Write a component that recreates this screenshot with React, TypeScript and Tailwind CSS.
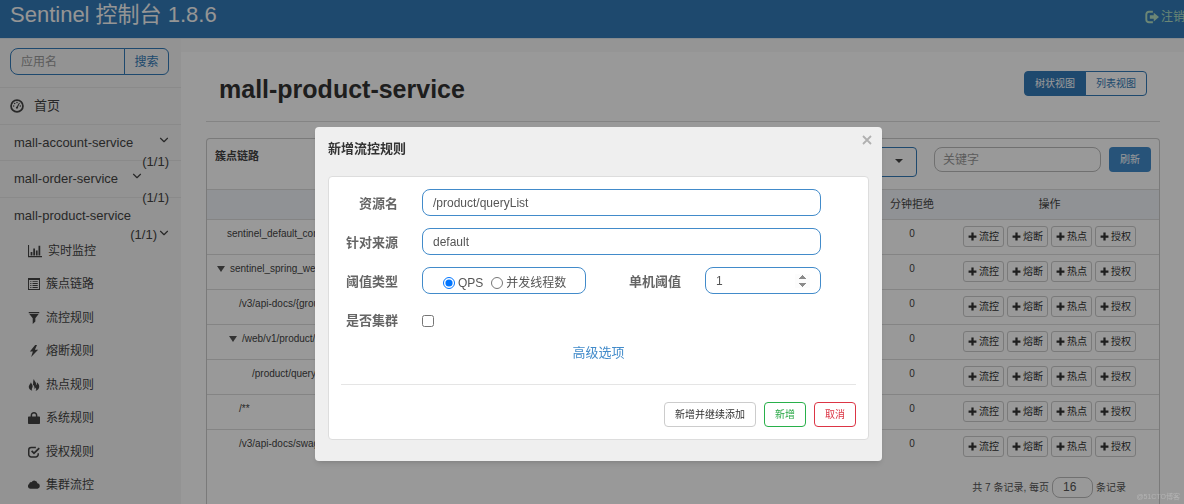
import { useState, type ReactNode } from "react"
import { ChevronDown } from "lucide-react"
import { clsx } from "clsx"

interface IconProps {
  className?: string
}

interface Resource {
  name: string
  indent: string
  expandable?: boolean
}

function Svg({ className, children }: IconProps & { children: ReactNode }) {
  return (
    <svg viewBox="0 0 16 16" fill="currentColor" aria-hidden="true" className={clsx("shrink-0", className)}>
      {children}
    </svg>
  )
}

const DashboardIcon = ({ className }: IconProps) => (
  <Svg className={className}>
    <circle cx="8" cy="8" r="6.8" fill="none" stroke="currentColor" strokeWidth="2" />
    <circle cx="4.2" cy="8" r=".9" />
    <circle cx="5.3" cy="5.2" r=".9" />
    <circle cx="8" cy="4" r=".9" />
    <circle cx="11.8" cy="8" r=".9" />
    <path d="M10.3 4.2l1 .6-2.2 4.3a1.3 1.3 0 1 1-1.2-.6z" />
  </Svg>
)

const StatsIcon = ({ className }: IconProps) => (
  <Svg className={className}>
    <path d="M0 1h1.2v12.800H16V15H0zM3 9h2v4H3zM6 5h2v8H6zM9 7.500h2V13H9zM12 2h2v11h-2z" />
  </Svg>
)

const ListIcon = ({ className }: IconProps) => (
  <Svg className={className}>
    <path
      fillRule="evenodd"
      d="M0 0h16v16H0zM1.300 2.600v12.100h13.400V2.600zM3 4.200h1.500v1.200H3zm3 0h7v1.200H6zM3 6.800h1.500V8H3zm3 0h7V8H6zM3 9.400h1.500v1.200H3zm3 0h7v1.200H6zM3 12h1.500v1.200H3zm3 0h7v1.200H6z"
    />
  </Svg>
)

const FilterIcon = ({ className }: IconProps) => (
  <Svg className={className}>
    <path d="M1 0h14v1.800H1zM1.800 2.500h12.400L9.800 8.300v4.400L6.300 16V8.300z" />
  </Svg>
)

const FlashIcon = ({ className }: IconProps) => (
  <Svg className={className}>
    <path d="M9.500 0L2.500 8.800h4L4.200 16l9.300-9.700H9.200L12 0z" />
  </Svg>
)

const FireIcon = ({ className }: IconProps) => (
  <Svg className={className}>
    <path d="M7.800 0c.4 2.600 3 3.800 3 6.600 0 .9-.3 1.500-.6 2 1.300-.6 2-2 1.600-4.200 2 1.600 3.200 3.500 3.200 5.600 0 2.900-1.900 5-5 6 1-1.400 1.300-3 .2-4.800-.3 1-.8 1.500-1.600 1.900.3-2.300-.3-4.200-2-5.500.6-2.600-.2-4.800 1.200-7.600z" />
    <path d="M3.900 4.400c.5 1.800 2.500 3.500 2.300 5.700-.2 1.900-2 3-.6 5.700C2.700 14.800 1 12.900 1 10.400c0-2.200 2.300-3.400 2.900-6z" />
  </Svg>
)

const LockIcon = ({ className }: IconProps) => (
  <Svg className={className}>
    <path
      fillRule="evenodd"
      d="M3.500 6V4.500C3.500 2 5.300 0 8 0s4.500 2 4.500 4.500V6H15a1 1 0 0 1 1 1v8a1 1 0 0 1-1 1H1a1 1 0 0 1-1-1V7a1 1 0 0 1 1-1zm2 0h5V4.500C10.500 3 9.500 2 8 2S5.500 3 5.500 4.500z"
    />
  </Svg>
)

const CheckIcon = ({ className }: IconProps) => (
  <Svg className={className}>
    <path
      d="M10.500 2H4.300A3.300 3.300 0 0 0 1 5.300v5.900a3.300 3.300 0 0 0 3.300 3.300h6a3.300 3.300 0 0 0 3.300-3.300V9.500"
      fill="none"
      stroke="currentColor"
      strokeWidth="2"
    />
    <path d="M4 7.300l1.600-1.600L8 8.100l6.200-6.200 1.600 1.600L8 11.300z" />
  </Svg>
)

const CloudIcon = ({ className }: IconProps) => (
  <Svg className={className}>
    <path d="M3.200 13A3.300 3.300 0 0 1 1.600 6.800 2.500 2.500 0 0 1 4.700 4.200a4.300 4.300 0 0 1 7.900 1.500 3.700 3.700 0 0 1 .2 7.300z" />
  </Svg>
)

const PlusIcon = ({ className }: IconProps) => (
  <Svg className={className}>
    <path d="M6 1h4v5h5v4h-5v5H6v-5H1V6h5z" />
  </Svg>
)

const LogoutIcon = ({ className }: IconProps) => (
  <Svg className={className}>
    <path d="M9 2H4.500A3 3 0 0 0 1.500 5v6a3 3 0 0 0 3 3H9" fill="none" stroke="currentColor" strokeWidth="2.200" />
    <path d="M10 3l6 5-6 5v-3H5.500V6H10z" />
  </Svg>
)

const menu = [
  { label: "实时监控", Icon: StatsIcon, size: "h-3.5 w-3.5" },
  { label: "簇点链路", Icon: ListIcon, size: "size-3" },
  { label: "流控规则", Icon: FilterIcon, size: "size-3" },
  { label: "熔断规则", Icon: FlashIcon, size: "size-3" },
  { label: "热点规则", Icon: FireIcon, size: "size-3" },
  { label: "系统规则", Icon: LockIcon, size: "size-3" },
  { label: "授权规则", Icon: CheckIcon, size: "size-3" },
  { label: "集群流控", Icon: CloudIcon, size: "size-3" },
]

const resources: Resource[] = [
  { name: "sentinel_default_context", indent: "pl-5" },
  { name: "sentinel_spring_web_context", indent: "pl-2.5", expandable: true },
  { name: "/v3/api-docs/{group}", indent: "pl-8" },
  { name: "/web/v1/product/list", indent: "pl-[22px]", expandable: true },
  { name: "/product/queryList", indent: "pl-[45px]" },
  { name: "/**", indent: "pl-8" },
  { name: "/v3/api-docs/swagger-config", indent: "pl-8" },
]

const actions = ["流控", "熔断", "热点", "授权"]

const fieldClass = "h-[27px] rounded-lg border border-[#428bca] bg-white px-2.5 text-xs text-[#555] outline-none"
const labelClass = "w-[70px] shrink-0 pt-[5px] text-right text-[13px] leading-5 font-bold text-[#666]"

function Header() {
  return (
    <header className="flex h-[39px] justify-between border-b border-[#e0e8ef] bg-[#337ab7] pl-2.5">
      <a href="#" className="text-[22px] leading-[30px] whitespace-nowrap text-[#f8f8f8]">
        Sentinel 控制台 1.8.6
      </a>
      <a href="#logout" className="flex h-[33px] w-[39px] items-center gap-0.5 text-xs whitespace-nowrap text-[#b4e0c4]">
        <LogoutIcon className="size-3.5" />
        注销
      </a>
    </header>
  )
}

function Sidebar() {
  return (
    <aside className="w-[181px] shrink-0 bg-[#f5f5f5] text-[13px] text-[#444]">
      <form className="flex h-[49px] border-b border-[#e7e7e7] px-2.5 pt-[9px]">
        <input
          aria-label="应用名"
          placeholder="应用名"
          className="h-[27px] w-[115px] rounded-l-lg border border-[#337ab7] px-2.5 text-xs outline-none placeholder:text-[#999]"
        />
        <button
          type="button"
          className="-ml-px h-[27px] w-[45px] rounded-r-md border border-[#337ab7] text-xs text-[#337ab7]"
        >
          搜索
        </button>
      </form>
      <a href="#home" className="flex h-[37px] items-center gap-2.5 border-b border-[#e7e7e7] pl-2.5">
        <DashboardIcon className="size-3.5" />
        首页
      </a>
      <a href="#account" className="block h-9 border-b border-[#e7e7e7] pt-2 pr-3 pl-3.5 leading-5">
        <span className="flex justify-between">
          mall-account-service <ChevronDown className="-mr-0.5 size-3.5" />
        </span>
        <span className="block text-right leading-[18px]">(1/1)</span>
      </a>
      <a href="#order" className="block h-[37px] border-b border-[#e7e7e7] pt-2 pr-3 pl-3.5 leading-5">
        <span className="flex gap-3">
          mall-order-service <ChevronDown className="size-3.5" />
        </span>
        <span className="block text-right leading-[18px]">(1/1)</span>
      </a>
      <a href="#product" className="block h-9 pt-2 pr-3 pl-3.5 leading-5">
        <span className="block">mall-product-service</span>
        <span className="flex justify-end leading-[18px]">
          (1/1)
          <ChevronDown className="-mr-0.5 size-3.5" />
        </span>
      </a>
      <ul className="grid h-[268px] grid-rows-8 text-xs">
        {menu.map(({ label, Icon, size }) => (
          <li key={label} className="flex items-center pl-7">
            <a href={`#${label}`} className="flex items-center gap-1.5">
              <Icon className={size} />
              {label}
            </a>
          </li>
        ))}
      </ul>
    </aside>
  )
}

function ResourceTable() {
  return (
    <table className="w-full table-fixed border-collapse text-[10px] text-[#444]">
      <thead>
        <tr className="h-[30px] border-y border-[#ddd] bg-[#f1f4f8] text-[11px]">
          <th />
          <th className="w-[56px] font-normal whitespace-nowrap">分钟拒绝</th>
          <th className="w-[219px] font-normal">操作</th>
        </tr>
      </thead>
      <tbody>
        {resources.map((resource) => (
          <tr key={resource.name} className="h-[35px] border-t border-[#ddd]">
            <td className={clsx("pt-1.5 align-top leading-4", resource.indent)}>
              <span className="flex items-center gap-[5px] whitespace-nowrap">
                {resource.expandable && (
                  <svg viewBox="0 0 8 6" className="h-1.5 w-2 fill-[#555]" aria-hidden="true">
                    <path d="M0 0h8L4 6z" />
                  </svg>
                )}
                {resource.name}
              </span>
            </td>
            <td className="pt-1.5 text-center align-top leading-4">0</td>
            <td className="pt-1.5 align-top">
              <div className="flex justify-center gap-[3px]">
                {actions.map((action) => (
                  <button
                    key={action}
                    type="button"
                    className="flex h-[21px] items-center gap-0.5 rounded-[3px] border border-[#ccc] px-1 text-[#333]"
                  >
                    <PlusIcon className="size-[9px]" />
                    {action}
                  </button>
                ))}
              </div>
            </td>
          </tr>
        ))}
      </tbody>
    </table>
  )
}

function Content() {
  return (
    <main className="min-w-0 flex-1 border-t-[13px] border-[#f8f8f8] bg-white pr-6 pl-[25px]">
      <div className="flex h-[70px] justify-between border-b border-[#ddd] pr-[13px] pl-[13px]">
        <h1 className="pt-[21px] text-[25px] leading-8 font-bold text-[#333]">mall-product-service</h1>
        <div className="flex pt-[19px] text-[10px]">
          <button type="button" className="h-[25px] rounded-l border border-[#337ab7] bg-[#337ab7] px-2.5 text-white">
            树状视图
          </button>
          <button type="button" className="-ml-px h-[25px] rounded-r border border-[#337ab7] px-2.5 text-[#337ab7]">
            列表视图
          </button>
        </div>
      </div>
      <section className="mt-4 rounded-t border border-b-0 border-[#ccc] pb-8">
        <div className="flex h-[50px] items-start pt-2 pr-2 pl-2">
          <h2 className="flex-1 text-[11px] leading-[18px] font-bold text-[#444]">簇点链路</h2>
          <div className="relative mr-[17px] w-[200px]">
            <select
              aria-label="机器"
              className="h-[30px] w-full appearance-none rounded-sm border border-[#337ab7] px-2.5 text-xs outline-none"
            >
              <option>192.168.1.2:8720</option>
            </select>
            <svg
              viewBox="0 0 8 4"
              aria-hidden="true"
              className="pointer-events-none absolute top-3 right-3.5 h-1 w-2 fill-[#444]"
            >
              <path d="M0 0h8L4 4z" />
            </svg>
          </div>
          <input
            aria-label="关键字"
            placeholder="关键字"
            className="mr-2 h-[25px] w-[167px] rounded-lg border border-[#bbb] px-2 text-xs outline-none placeholder:text-[#999]"
          />
          <button type="button" className="h-[25px] rounded bg-[#428bca] px-[11px] text-[10px] text-white">
            刷新
          </button>
        </div>
        <ResourceTable />
        <div className="flex items-center justify-end gap-[3px] pt-3 pr-[33px] text-[10px] text-[#555]">
          <label htmlFor="page-size">共 7 条记录, 每页</label>
          <input
            id="page-size"
            defaultValue="16"
            className="h-[21px] w-[41px] rounded-lg border border-[#bbb] px-2.5 text-xs outline-none"
          />
          <span>条记录</span>
        </div>
      </section>
    </main>
  )
}

function FlowRuleDialog() {
  const [thresholdType, setThresholdType] = useState("qps")

  return (
    <div className="fixed inset-0 flex items-start justify-center bg-black/40 pt-[127px] pl-[13px]">
      <div
        role="dialog"
        aria-labelledby="dialog-title"
        className="w-[567px] rounded bg-[#efefef] px-[13px] pb-[21px] shadow-md"
      >
        <div className="flex h-[49px] justify-between">
          <h2 id="dialog-title" className="pt-3 text-[13px] leading-5 font-bold text-[#333]">
            新增流控规则
          </h2>
          <button
            type="button"
            aria-label="关闭"
            className="mt-[7px] -mr-1 flex size-3 items-center justify-center text-[#b0b0b0]"
          >
            <svg viewBox="0 0 10 10" className="size-2.5 shrink-0" stroke="currentColor" strokeWidth="1.8">
              <path d="M1 1l8 8M9 1L1 9" />
            </svg>
          </button>
        </div>
        <form className="rounded border border-[#ddd] bg-white px-3 py-3">
          <div className="-ml-[13px] space-y-3 pr-[35px]">
            <div className="flex gap-6">
              <label htmlFor="resource" className={labelClass}>
                资源名
              </label>
              <input id="resource" defaultValue="/product/queryList" className={clsx(fieldClass, "flex-1")} />
            </div>
            <div className="flex gap-6">
              <label htmlFor="origin" className={labelClass}>
                针对来源
              </label>
              <input id="origin" defaultValue="default" className={clsx(fieldClass, "flex-1")} />
            </div>
            <div className="flex gap-6">
              <span className={labelClass}>阈值类型</span>
              <div className={clsx(fieldClass, "flex w-[164px] items-center gap-2 pt-1 pl-5 whitespace-nowrap")}>
                <label className="flex items-center gap-[3px]">
                  <input
                    type="radio"
                    name="grade"
                    className="size-3"
                    checked={thresholdType === "qps"}
                    onChange={() => setThresholdType("qps")}
                  />
                  QPS
                </label>
                <label className="flex items-center gap-[3px]">
                  <input
                    type="radio"
                    name="grade"
                    className="size-3"
                    checked={thresholdType === "thread"}
                    onChange={() => setThresholdType("thread")}
                  />
                  并发线程数
                </label>
              </div>
              <label htmlFor="count" className={clsx(labelClass, "ml-auto")}>
                单机阈值
              </label>
              <input
                id="count"
                type="number"
                defaultValue={1}
                className={clsx(fieldClass, "w-[116px] [&::-webkit-inner-spin-button]:opacity-100")}
              />
            </div>
            <div className="flex gap-6">
              <label htmlFor="cluster" className={labelClass}>
                是否集群
              </label>
              <input id="cluster" type="checkbox" className="mt-[9px] size-3" />
            </div>
          </div>
          <div className="mt-3 border-b border-[#e5e5e5] pb-[21px] text-center text-[13px] leading-5">
            <a href="#advanced" className="text-[#428bca]">
              高级选项
            </a>
          </div>
          <div className="flex justify-end gap-2 pt-[17px] text-[10px]">
            <button type="button" className="h-[25px] rounded border border-[#ccc] px-2.5 text-[#333]">
              新增并继续添加
            </button>
            <button type="button" className="h-[25px] rounded border border-[#28b04a] px-2.5 text-[#28a745]">
              新增
            </button>
            <button type="button" className="h-[25px] rounded border border-[#dc3545] px-2.5 text-[#dc3545]">
              取消
            </button>
          </div>
        </form>
      </div>
    </div>
  )
}

export default function App() {
  return (
    <div className="h-screen overflow-hidden bg-white font-['Liberation_Sans','Noto_Sans_CJK_SC',sans-serif]">
      <Header />
      <div className="flex min-h-full">
        <Sidebar />
        <Content />
      </div>
      <FlowRuleDialog />
      <span className="fixed right-1 bottom-0.5 text-[7px] text-white/25">@51CTO博客</span>
    </div>
  )
}
